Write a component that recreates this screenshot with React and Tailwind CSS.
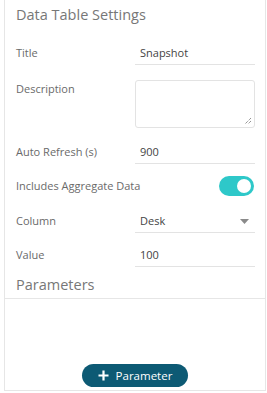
import React from 'react';

const font = { fontFamily: '"Open Sans", "Liberation Sans", sans-serif' };

const Field = ({ value, arrow }) => (
  <div className="w-[120px] h-[23px] border-b border-[#e3e3e3] flex items-center justify-between pl-[5px] pr-[6px] text-[11px] text-[#444]">
    <span>{value}</span>
    {arrow && (
      <svg width="9" height="5" viewBox="0 0 9 5">
        <path d="M0 0 L9 0 L4.5 5 Z" fill="#8a8a8a" />
      </svg>
    )}
  </div>
);

const Row = ({ label, children, className = '' }) => (
  <div className={`flex items-center ${className}`}>
    <div className="w-[119px] whitespace-nowrap text-[11px] text-[#6a6a6a]">{label}</div>
    {children}
  </div>
);

export default function App() {
  return (
    <div className="w-[267px] h-[393px] bg-white" style={font}>
      <div className="ml-[4px] mr-[1px] h-[391px] border-l border-r border-b border-[#e6e6e6] flex flex-col">
        <div className="h-[30px] pl-[11px] text-[14.5px] leading-[30px] text-[#777]">Data Table Settings</div>

        <Row label="Title" className="mt-[12px] pl-[11px]">
          <Field value="Snapshot" />
        </Row>

        <div className="flex items-start mt-[15px] pl-[11px]">
          <div className="w-[119px] text-[11px] text-[#6a6a6a] pt-[1px]">Description</div>
          <div className="relative w-[120px] h-[48px] border border-[#e3e3e3] rounded-[3px]">
            <svg className="absolute right-[2px] bottom-[2px]" width="8" height="8" viewBox="0 0 8 8">
              <path d="M7 1 L1 7 M7 4 L4 7" stroke="#555" strokeWidth="0.9" strokeDasharray="1 1" />
            </svg>
          </div>
        </div>

        <Row label="Auto Refresh (s)" className="mt-[13px] pl-[11px]">
          <Field value="900" />
        </Row>

        <Row label="Includes Aggregate Data" className="mt-[11px] pl-[11px] h-[22px]">
          <div className="w-[120px] flex justify-end pr-[1px]">
            <div className="w-[35px] h-[20px] rounded-full bg-[#2ec8c9] flex items-center justify-end pr-[3px]">
              <div className="w-[14px] h-[14px] rounded-full bg-white" />
            </div>
          </div>
        </Row>

        <Row label="Column" className="mt-[13px] pl-[11px]">
          <Field value="Desk" arrow />
        </Row>

        <Row label="Value" className="mt-[11px] pl-[11px]">
          <Field value="100" />
        </Row>

        <div className="pl-[11px] pt-[8px] pb-[3px] text-[14.5px] leading-[20px] text-[#777] border-b border-[#e6e6e6]">Parameters</div>

        <div className="flex-1" />

        <div className="flex justify-center pb-[3px]">
          <button className="w-[106px] h-[23px] rounded-full bg-[#0d5a74] text-white text-[11.5px] flex items-center justify-center gap-[7px]">
            <svg width="11" height="11" viewBox="0 0 11 11">
              <path d="M5.5 0.5 V10.5 M0.5 5.5 H10.5" stroke="white" strokeWidth="2.2" />
            </svg>
            <span>Parameter</span>
          </button>
        </div>
      </div>
    </div>
  );
}
